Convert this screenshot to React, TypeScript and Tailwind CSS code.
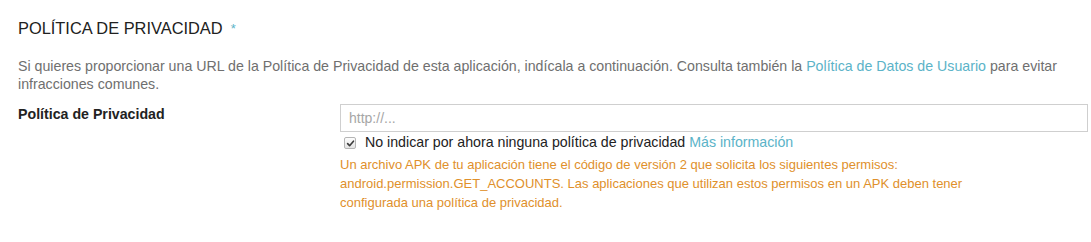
import { useState } from "react";

const font = { fontFamily: '"Liberation Sans", Arial, sans-serif' };

function CheckMark({ checked, onToggle }: { checked: boolean; onToggle: () => void }) {
  return (
    <button
      type="button"
      onClick={onToggle}
      className="w-[12px] h-[12px] rounded-[2px] border border-[#b5b5b5] bg-gradient-to-b from-[#fdfdfd] to-[#e4e4e4] flex items-center justify-center shrink-0"
    >
      {checked && (
        <svg width="9" height="9" viewBox="0 0 10 10">
          <path
            d="M1.8 5.2 L4 7.4 L8.3 2.4"
            fill="none"
            stroke="#3c3c3c"
            strokeWidth="1.8"
            strokeLinecap="round"
            strokeLinejoin="round"
          />
        </svg>
      )}
    </button>
  );
}

export default function App() {
  const [skip, setSkip] = useState(true);

  return (
    <div className="w-[1091px] h-[242px] bg-white px-[18px] pt-[18px]" style={font}>
      <h2 className="flex items-start text-[16.4px] leading-[20px] text-[#212121]">
        POLÍTICA DE PRIVACIDAD
        <span className="ml-[8px] mt-[3px] text-[13px] leading-[16px] text-[#5bb3c8]">*</span>
      </h2>

      <p className="mt-[19px] text-[14.2px] leading-[18px] text-[#6f6f6f]">
        Si quieres proporcionar una URL de la Política de Privacidad de esta aplicación, indícala
        a continuación. Consulta también la{" "}
        <a href="#" className="text-[#5bb3c8]">
          Política de Datos de Usuario
        </a>{" "}
        para evitar infracciones comunes.
      </p>

      <div className="mt-[11px] flex">
        <label className="w-[322px] shrink-0 text-[14.2px] leading-[18px] font-bold text-[#222] pt-[1px]">
          Política de Privacidad
        </label>

        <div className="flex-1 -mr-[15px]">
          <input
            type="text"
            placeholder="http://..."
            disabled={skip}
            className="w-full h-[28px] border border-[#cfcfcf] bg-white px-[8px] text-[14px] text-[#333] placeholder:text-[#a6a6a6] outline-none"
            style={font}
          />

          <div className="mt-[2px] flex items-center gap-[9px] pl-[4px] h-[18px] text-[14.2px] text-[#222]">
            <CheckMark checked={skip} onToggle={() => setSkip(!skip)} />
            <span>
              No indicar por ahora ninguna política de privacidad{" "}
              <a href="#" className="text-[#5bb3c8]">
                Más información
              </a>
            </span>
          </div>

          <p className="mt-[3px] max-w-[640px] text-[13px] leading-[19px] text-[#e0902b]">
            Un archivo APK de tu aplicación tiene el código de versión 2 que solicita los siguientes
            permisos: android.permission.GET_ACCOUNTS. Las aplicaciones que utilizan estos permisos
            en un APK deben tener configurada una política de privacidad.
          </p>
        </div>
      </div>
    </div>
  );
}
